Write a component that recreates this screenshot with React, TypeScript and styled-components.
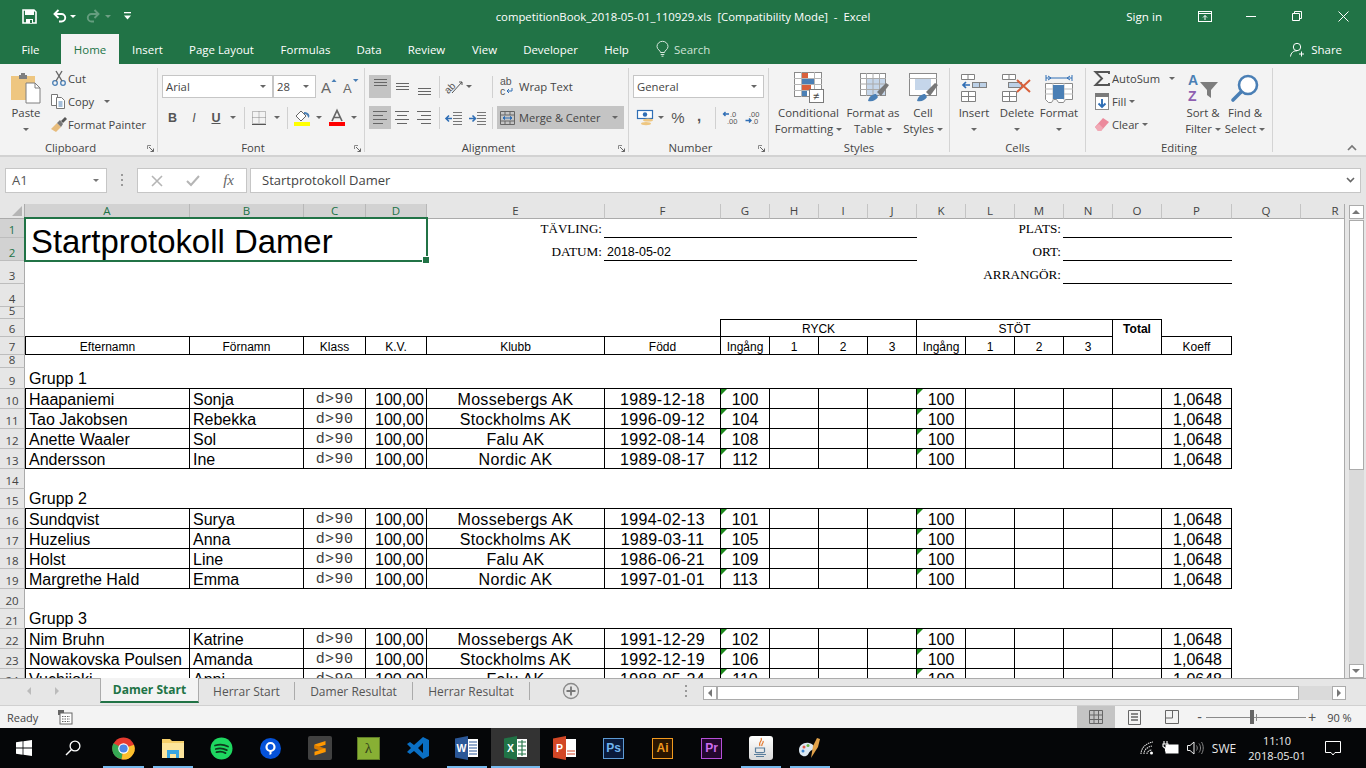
import React from 'react';
import styled, { createGlobalStyle } from 'styled-components';

const UI = '"Open Sans", "Noto Sans", sans-serif';
const CELL = '"Liberation Sans", Arial, sans-serif';
const GREEN = '#217346';

const Global = createGlobalStyle`
  html, body { margin: 0; padding: 0; background: #fff; overflow: hidden; }
  * { box-sizing: border-box; }
  svg { display: block; flex-shrink: 0; overflow: visible; }
`;

const Window = styled.div`
  width: 1366px; height: 768px; display: flex; flex-direction: column; overflow: hidden;
  font-family: ${UI}; font-size: 11.3px; color: #444;
`;

/* ---------- title bar ---------- */
const TitleBar = styled.div`
  height: 32px; background: ${GREEN}; color: #fff; display: grid; grid-template-columns: 1fr auto 1fr; align-items: center;
`;
const Qat = styled.div`display: flex; align-items: center; padding-left: 21px;`;
const QatSlot = styled.div<{ $w: number; $ml?: number }>`width: ${p => p.$w}px; margin-left: ${p => p.$ml ?? 0}px; display: flex; justify-content: center; align-items: center;`;
const DocTitle = styled.div`font-size: 11.35px; white-space: pre;`;
const WinControls = styled.div`display: flex; align-items: center; justify-content: flex-end;`;
const SignIn = styled.span`font-size: 11.6px; margin-right: 20px;`;
const WinBtn = styled.div`width: 46px; display: flex; justify-content: center;`;

/* ---------- ribbon tabs ---------- */
const TabRow = styled.div`height: 32px; background: ${GREEN}; display: flex; align-items: flex-end; color: #fff;`;
const RibbonTab = styled.div<{ $w: number; $on?: boolean }>`
  width: ${p => p.$w}px; height: 30px; display: flex; align-items: center; justify-content: center;
  font-size: 11.45px; flex-shrink: 0;
  background: ${p => (p.$on ? '#f3f3f3' : 'transparent')}; color: ${p => (p.$on ? GREEN : '#fff')};
`;
const SearchBox = styled.div`display: flex; align-items: center; gap: 5px; height: 30px; padding: 0 0 0 14px; font-size: 11.45px; color: #cfe3d7;`;
const Share = styled.div`margin-left: auto; display: flex; align-items: center; gap: 6px; height: 30px; padding: 0 24px 0 0; font-size: 11.45px;`;

/* ---------- ribbon ---------- */
const Ribbon = styled.div`height: 93px; background: #f3f3f3; border-bottom: 2px solid #d2d2d2; display: flex; position: relative;`;
const Group = styled.div<{ $w: number }>`
  width: ${p => p.$w}px; height: 84px; margin-top: 4px; border-right: 1px solid #d4d4d4; display: flex; flex-direction: column; position: relative; flex-shrink: 0;
`;
const GroupBody = styled.div<{ $pl?: number }>`height: 73px; display: flex; padding-left: ${p => p.$pl ?? 0}px;`;
const GroupLabel = styled.div<{ $launch?: boolean }>`
  height: 11px; line-height: 14px; text-align: center; font-size: 11.3px; color: #444; padding-right: ${p => (p.$launch ? 16 : 0)}px; white-space: nowrap;
`;
const Launcher = styled.div`position: absolute; right: 3px; bottom: 0;`;
const Collapse = styled.div`position: absolute; right: 9px; bottom: 4px;`;

const Big = styled.div<{ $w: number }>`
  width: ${p => p.$w}px; display: flex; flex-direction: column; align-items: center; padding-top: 3px; flex-shrink: 0; color: #444;
`;
const BigIcon = styled.div`height: 34px; display: flex; align-items: center; justify-content: center;`;
const BigLine = styled.div`height: 16px; line-height: 16px; font-size: 11.4px; white-space: nowrap; display: flex; align-items: center; gap: 3px;`;
const CaretLine = styled.div`height: 16px; display: flex; align-items: center;`;

const Caret = styled.span<{ $c?: string }>`
  display: inline-block; width: 0; height: 0; flex-shrink: 0;
  border-left: 3.5px solid transparent; border-right: 3.5px solid transparent; border-top: 3.5px solid ${p => p.$c ?? '#666'};
`;

const SmallCol = styled.div<{ $w: number }>`width: ${p => p.$w}px; display: flex; flex-direction: column; margin-top: -1px; flex-shrink: 0;`;
const SmallRow = styled.div`height: 23px; display: flex; align-items: center; font-size: 11.2px; white-space: nowrap;`;
const SmallIcon = styled.div<{ $w: number }>`width: ${p => p.$w}px; display: flex; justify-content: center; align-items: center; flex-shrink: 0;`;

const Stack = styled.div`display: flex; flex-direction: column; padding-top: 7px; gap: 8px;`;
const Line = styled.div`height: 23px; display: flex; align-items: center;`;
const Slot = styled.div<{ $w: number; $ml?: number }>`
  width: ${p => p.$w}px; margin-left: ${p => p.$ml ?? 0}px; height: 23px; display: flex; align-items: center; justify-content: center; flex-shrink: 0;
`;
const Toggle = styled(Slot)<{ $on?: boolean }>`background: ${p => (p.$on ? '#c4c4c4' : 'transparent')};`;
const VSep = styled.div<{ $ml: number; $mr?: number }>`width: 1px; height: 22px; background: #d0d0d0; margin: 0 ${p => p.$mr ?? 0}px 0 ${p => p.$ml}px; flex-shrink: 0;`;
const Combo = styled.div<{ $w: number; $ml?: number }>`
  width: ${p => p.$w}px; height: 23px; margin-left: ${p => p.$ml ?? 0}px; background: #fff; border: 1px solid #c6c6c6; display: flex; align-items: center; justify-content: space-between;
  padding: 0 6px 0 3px; font-size: 11.3px; flex-shrink: 0; color: #444;
`;
const BoldLetter = styled.span<{ $b?: boolean; $i?: boolean; $u?: boolean }>`
  font-family: ${CELL}; font-size: 12.5px; color: #555; font-weight: ${p => (p.$b ? 700 : 400)}; font-style: ${p => (p.$i ? 'italic' : 'normal')}; text-decoration: ${p => (p.$u ? 'underline' : 'none')};
`;
const Label = styled.span<{ $ml?: number }>`margin-left: ${p => p.$ml ?? 0}px; white-space: nowrap; display: inline-flex; align-items: center;`;
const Merge = styled.div`
  width: 127px; height: 23px; background: #c4c4c4; margin-left: 4px; display: flex; align-items: center; padding-left: 3px; flex-shrink: 0; font-size: 11.1px;
`;
const Symbol = styled.span<{ $s: number; $pb?: number; $bold?: boolean }>`
  font-family: ${CELL}; font-size: ${p => p.$s}px; color: #555; line-height: 1; padding-bottom: ${p => p.$pb ?? 0}px; font-weight: ${p => (p.$bold ? 700 : 400)};
`;

/* ---------- formula bar ---------- */
const FormulaBar = styled.div`height: 47px; background: #e6e6e6; display: flex; align-items: flex-start; padding: 11px 5px 0 5px;`;
const NameBox = styled.div`
  width: 102px; height: 25px; background: #fff; border: 1px solid #c6c6c6; display: flex; align-items: center; justify-content: space-between; padding: 0 7px 1px 6px; font-size: 13px; color: #555;
`;
const Dots = styled.div`width: 30px; height: 25px; display: flex; align-items: center; justify-content: center;`;
const FxBox = styled.div`
  width: 110px; height: 25px; background: #fff; border: 1px solid #c6c6c6; display: flex; align-items: center; padding: 0 12px 0 13px; justify-content: space-between;
`;
const FormulaInput = styled.div`
  flex: 1; height: 25px; margin-left: 3px; background: #fff; border: 1px solid #c6c6c6; display: flex; align-items: center; justify-content: space-between; padding: 0 5px 1px 11px; font-size: 13px; color: #444;
`;
const FxText = styled.span`font-family: "Liberation Serif", serif; font-style: italic; font-size: 15px; color: #666;`;

/* ---------- sheet ---------- */
const SheetArea = styled.div`height: 474px; display: flex; background: #e6e6e6;`;
const Sheet = styled.div`
  width: 1345px; height: 474px; overflow: hidden; background: #fff; display: grid; border-right: 1px solid #ababab;
  grid-template-columns: 25px 165px 114px 62px 61px 178px 116px repeat(9, 49px) 70px 69px 69px;
  grid-template-rows: 15px 19px 23px 23px 23px 12px 18px 18px 13px 21px repeat(15, 20px);
  font-family: ${CELL}; color: #000;
`;
const Corner = styled.div`grid-column: 1; grid-row: 1; background: #e6e6e6; border-bottom: 1px solid #ababab; border-right: 1px solid #ababab; display: flex; align-items: flex-end; justify-content: flex-end; padding: 0 2px 2px 0;`;
const ColHead = styled.div<{ $on?: boolean; $c: number }>`
  grid-row: 1; grid-column: ${p => p.$c}; background: ${p => (p.$on ? '#d2d2d2' : '#e6e6e6')}; color: ${p => (p.$on ? GREEN : '#444')};
  border-right: 1px solid ${p => (p.$on ? '#b8b8b8' : '#c4c4c4')}; border-bottom: 1px solid #ababab;
  font-family: ${UI}; font-size: 11.5px; display: flex; align-items: center; justify-content: center; line-height: 14px; overflow: hidden;
`;
const RowHead = styled.div<{ $on?: boolean; $r: number }>`
  grid-column: 1; grid-row: ${p => p.$r}; background: ${p => (p.$on ? '#d2d2d2' : '#e6e6e6')}; color: ${p => (p.$on ? GREEN : '#444')};
  border-right: 1px solid #ababab; border-bottom: 1px solid #bdbdbd; font-family: ${UI}; font-size: 11.5px;
  display: flex; align-items: flex-end; justify-content: center; line-height: 15px; overflow: hidden;
`;
type CellProps = {
  $c: number; $r: number; $span?: number; $rspan?: number; $t?: boolean; $rb?: boolean; $b?: boolean; $l?: boolean;
  $align?: string; $size?: number; $serif?: boolean; $bold?: boolean; $pl?: number; $pr?: number; $pb?: number; $flag?: boolean; $valign?: string;
  $lh?: number; $ls?: number; $ext?: boolean;
};
const Cell = styled.div<CellProps>`
  grid-column: ${p => p.$c} / span ${p => p.$span ?? 1}; grid-row: ${p => p.$r} / span ${p => p.$rspan ?? 1};
  margin-left: ${p => (p.$ext ? -1 : 0)}px;
  border-top: ${p => (p.$t ? '1px solid #000' : 'none')}; border-right: ${p => (p.$rb ? '1px solid #000' : 'none')};
  border-bottom: ${p => (p.$b ? '1px solid #000' : 'none')}; border-left: ${p => (p.$l ? '1px solid #000' : 'none')};
  display: flex; align-items: ${p => p.$valign ?? 'flex-end'}; justify-content: ${p => p.$align ?? 'flex-start'};
  font-size: ${p => p.$size ?? 16}px; font-family: ${p => (p.$serif ? '"Liberation Serif", serif' : CELL)}; font-weight: ${p => (p.$bold ? 700 : 400)};
  padding-left: ${p => p.$pl ?? 0}px; padding-right: ${p => p.$pr ?? 0}px; padding-bottom: ${p => p.$pb ?? 0}px;
  letter-spacing: ${p => p.$ls ?? 0}px; white-space: nowrap; line-height: ${p => p.$lh ?? 16}px; position: relative; min-width: 0; overflow: ${p => (p.$flag ? 'visible' : 'hidden')};
  color: #000;
  ${p => p.$flag ? `&::before { content: ''; position: absolute; left: 0; top: 0; width: 0; height: 0; border-top: 6px solid #1b8a1b; border-right: 6px solid transparent; }` : ''}
`;
const Mono = styled.span`font-family: "Liberation Mono", monospace; font-size: 15px; letter-spacing: 0.4px; color: #3c3c3c;`;
const Selected = styled.div`
  grid-column: 2 / span 4; grid-row: 2 / span 2; position: relative; display: flex; align-items: center; padding: 3px 0 0 6px;
  font-size: 32.9px; line-height: 40px; white-space: nowrap; color: #000;
  &::before { content: ''; position: absolute; left: -1px; top: -2px; right: -1px; bottom: -1px; border: 2px solid ${GREEN}; }
  &::after { content: ''; position: absolute; right: -3px; bottom: -3px; width: 6px; height: 6px; background: ${GREEN}; border: 1px solid #fff; }
`;

const VScroll = styled.div`width: 21px; height: 474px; background: #e6e6e6; display: flex; flex-direction: column; align-items: center; padding: 1px 0 0 1px; flex-shrink: 0;`;
const ScrollBtn = styled.div<{ $w?: number; $h?: number }>`
  width: ${p => p.$w ?? 15}px; height: ${p => p.$h ?? 14}px; background: #fff; border: 1px solid #ababab; display: flex; align-items: center; justify-content: center; flex-shrink: 0;
`;
const VThumb = styled.div`width: 15px; height: 250px; margin-top: 1px; background: #fff; border: 1px solid #ababab;`;
const VTrack = styled.div`flex: 1; width: 15px; background: #dadada;`;
const Tri = styled.span<{ $d: 'u' | 'd' | 'l' | 'r'; $c?: string }>`
  width: 0; height: 0; display: inline-block; border: 4px solid transparent;
  ${p => p.$d === 'u' ? `border-top: 0; border-bottom: 4px solid ${p.$c ?? '#777'};` : ''}
  ${p => p.$d === 'd' ? `border-bottom: 0; border-top: 4px solid ${p.$c ?? '#777'};` : ''}
  ${p => p.$d === 'l' ? `border-left: 0; border-right: 4px solid ${p.$c ?? '#777'};` : ''}
  ${p => p.$d === 'r' ? `border-right: 0; border-left: 4px solid ${p.$c ?? '#777'};` : ''}
`;

/* ---------- sheet tabs ---------- */
const TabsBar = styled.div`
  height: 28px; background: #e6e6e6; border-top: 1px solid #ababab; border-bottom: 1px solid #d0d0d0; display: flex; align-items: flex-start;
`;
const TabNav = styled.div`width: 100px; height: 24px; display: flex; align-items: center; padding-left: 27px; gap: 24px; flex-shrink: 0;`;
const SheetTab = styled.div<{ $w: number; $on?: boolean }>`
  width: ${p => p.$w}px; flex-shrink: 0; display: flex; align-items: center; justify-content: center; font-size: 12px;
  margin-top: ${p => (p.$on ? '-1px' : '3px')}; height: ${p => (p.$on ? '25px' : '18px')};
  color: ${p => (p.$on ? GREEN : '#555')}; font-weight: ${p => (p.$on ? 700 : 400)};
  background: ${p => (p.$on ? '#f3f3f3' : 'transparent')};
  border-right: 1px solid #ababab; border-left: ${p => (p.$on ? '1px solid #ababab' : 'none')};
  border-bottom: ${p => (p.$on ? `2px solid ${GREEN}` : 'none')};
`;
const AddTab = styled.div`margin: 3px 0 0 32px; width: 18px; height: 18px;`;
const HDots = styled.div`margin: 6px 0 0 105px; width: 3px;`;
const HScroll = styled.div`margin: 7px 0 0 15px; display: flex; width: 643px; height: 14px; background: #dadada;`;
const HThumb = styled.div`width: 582px; height: 14px; background: #fff; border: 1px solid #ababab;`;
const HGap = styled.div`flex: 1;`;

/* ---------- status ---------- */
const Status = styled.div`height: 22px; background: #f3f3f3; display: flex; align-items: center; font-size: 11px; color: #444; padding-left: 7px;`;
const MacroIcon = styled.div`margin-left: 20px;`;
const ViewBtn = styled.div<{ $on?: boolean; $w: number; $ml?: number }>`
  width: ${p => p.$w}px; height: 22px; margin-left: ${p => p.$ml ?? 0}px; display: flex; align-items: center; justify-content: center; background: ${p => (p.$on ? '#c4c4c4' : 'transparent')};
`;
const Zoom = styled.div`display: flex; align-items: center; margin-left: 6px; white-space: nowrap;`;
const Slider = styled.div`width: 100px; height: 1px; background: #8a8a8a; margin: 0 2px 0 4px; position: relative;`;
const Knob = styled.span`position: absolute; left: 44px; top: -7px; width: 4px; height: 14px; background: #666;`;
const Tick = styled.span`position: absolute; left: 50px; top: -3px; width: 1px; height: 7px; background: #8a8a8a;`;
const ZoomText = styled.span`margin-left: 11px; font-size: 11px;`;

/* ---------- taskbar ---------- */
const Taskbar = styled.div`height: 40px; background: #050608; display: flex; align-items: stretch; color: #e8e8e8; font-size: 12px;`;
const TaskBtn = styled.div<{ $w: number; $run?: boolean; $on?: boolean }>`
  width: ${p => p.$w}px; display: flex; align-items: center; justify-content: center; position: relative; flex-shrink: 0;
  background: ${p => (p.$on ? '#333' : 'transparent')};
  ${p => p.$run ? `&::after { content: ''; position: absolute; left: ${p.$on ? 0 : 5}px; right: ${p.$on ? 0 : 4}px; bottom: 0; height: 2px; background: #76b9ed; }` : ''}
`;
const AppBox = styled.div<{ $bd: string; $bg: string; $fg: string }>`
  width: 21px; height: 21px; border: 1.5px solid ${p => p.$bd}; background: ${p => p.$bg}; color: ${p => p.$fg}; display: flex; align-items: center; justify-content: center;
  font-family: ${CELL}; font-weight: 700; font-size: 12px; line-height: 1;
`;
const Tray = styled.div`margin-left: auto; display: flex; align-items: center;`;
const TraySlot = styled.div<{ $w: number; $pl?: number }>`width: ${p => p.$w}px; padding-left: ${p => p.$pl ?? 0}px; display: flex; justify-content: center; align-items: center;`;
const Clock = styled.div`width: 80px; text-align: center; line-height: 15px; font-size: 11px; color: #eee;`;

/* ---------- icons ---------- */
const Launch = () => (<svg width="7" height="7" viewBox="0 0 7 7"><path d="M.5 4V.5H4" fill="none" stroke="#8a8a8a"/><path d="M2 2l4.500 4.500M6.500 3.500v3h-3" fill="none" stroke="#666"/></svg>);
const SaveI = () => (<svg width="15" height="15" viewBox="0 0 15 15"><path d="M1 1h11l2 2v11H1z" fill="none" stroke="#fff" strokeWidth="1.6"/><rect x="3" y="1" width="9" height="5" fill="#fff"/><rect x="4" y="10" width="7" height="4" fill="#fff"/><rect x="8" y="11" width="2" height="3" fill={GREEN}/></svg>);
const UndoShape = styled.svg<{ $o?: number; $flip?: boolean }>`opacity: ${p => p.$o ?? 1}; transform: ${p => (p.$flip ? 'scaleX(-1)' : 'none')};`;
const UndoI = ({ o = 1, flip = false }: { o?: number; flip?: boolean }) => (<UndoShape $o={o} $flip={flip} width="14" height="14" viewBox="0 0 14 14"><path d="M2 5h6.500a3.700 3.700 0 0 1 0 7.500H6" fill="none" stroke="#fff" strokeWidth="1.9"/><path d="M5.500 1L1.500 5l4 4" fill="none" stroke="#fff" strokeWidth="1.9"/></UndoShape>);
const CustomizeI = () => (<svg width="7" height="8" viewBox="0 0 7 8"><rect y="0" width="7" height="1.3" fill="#fff"/><path d="M0 3.500h7L3.500 7.500z" fill="#fff"/></svg>);
const RibbonDisp = () => (<svg width="14" height="11" viewBox="0 0 14 11"><rect x=".5" y=".5" width="13" height="10" fill="none" stroke="#fff"/><path d="M.5 2.500h13" stroke="#fff"/><path d="M7 9V4.500M5 6.500l2-2 2 2" fill="none" stroke="#fff"/></svg>);
const MinI = () => (<svg width="10" height="10" viewBox="0 0 10 10"><path d="M0 5.500h10" stroke="#fff"/></svg>);
const RestoreI = () => (<svg width="10" height="10" viewBox="0 0 10 10"><path d="M.5 2.500h7v7h-7zM2.500 2.500v-2h7v7h-2" fill="none" stroke="#fff"/></svg>);
const CloseI = () => (<svg width="11" height="11" viewBox="0 0 11 11"><path d="M.5.5l10 10M10.500.5l-10 10" stroke="#fff"/></svg>);
const BulbI = () => (<svg width="13" height="16" viewBox="0 0 13 16"><path d="M4.500 11.500c0-2-3.500-3-3.500-6a5.500 5.200 0 0 1 11 0c0 3-3.500 4-3.500 6zM4.700 13.500h3.600M5.500 15.200h2" fill="none" stroke="#d8e8de"/></svg>);
const ShareI = () => (<svg width="15" height="15" viewBox="0 0 15 15"><circle cx="7" cy="5" r="3.700" fill="none" stroke="#fff"/><path d="M.5 14.500c.5-4 3-5.700 6.500-5.700M11.500 9.500v5M9 12h5" fill="none" stroke="#fff"/></svg>);
const PasteI = () => (<svg width="30" height="32" viewBox="0 0 30 32"><rect x="0" y="4" width="24" height="24" fill="#eec680"/><path d="M8 3h8v4H8z" fill="#7f7f7f"/><rect x="10" y="1" width="4" height="3" fill="#7f7f7f"/><path d="M15 11h9l5 5v15H15z" fill="#fff" stroke="#7f7f7f"/><path d="M24 11v5h5" fill="none" stroke="#7f7f7f"/></svg>);
const CutI = () => (<svg width="14" height="15" viewBox="0 0 14 15"><circle cx="3" cy="12" r="2.300" fill="none" stroke="#4a7fb5" strokeWidth="1.3"/><circle cx="11" cy="12" r="2.300" fill="none" stroke="#4a7fb5" strokeWidth="1.3"/><path d="M4 10L10 0M10 10L4 0" stroke="#666" strokeWidth="1.4"/></svg>);
const CopyI = () => (<svg width="15" height="15" viewBox="0 0 15 15"><path d="M.5.5h6v11h-6z" fill="#fff" stroke="#777"/><path d="M5.500 3.500h5l3 3v8h-8z" fill="#fff" stroke="#777"/><path d="M7.500 8h4M7.500 10h4M7.500 12h4" stroke="#4a7fb5"/></svg>);
const PainterI = () => (<svg width="16" height="15" viewBox="0 0 16 15"><path d="M0 12l6-6 4 4-5 5z" fill="#e7bc7c"/><path d="M6 6l3-3 3 4-2 3z" fill="#777"/><path d="M10 4l4-4 2 2-4 4z" fill="#555"/></svg>);
const GrowI = ({ big }: { big?: boolean }) => (<svg width="16" height="17" viewBox="0 0 16 17"><text x="0" y="15" fontFamily="Liberation Sans" fontSize={big ? 15 : 13} fill="#666">A</text><path d={big ? 'M10.500 4l2.500-3 2.500 3z' : 'M10 1h5.500L12.700 4z'} fill="#4a7fb5"/></svg>);
const BordersI = () => (<svg width="14" height="14" viewBox="0 0 14 14"><path d="M.5.5h13v12H.5zM7 .5v12M.5 6.500h13" fill="none" stroke="#888" strokeDasharray="1 1"/><path d="M0 13.500h14" stroke="#555"/></svg>);
const FillI = () => (<svg width="17" height="16" viewBox="0 0 17 16"><path d="M2 6l5-5 5 5-5 5z" fill="#fff" stroke="#666"/><path d="M10 2c3 0 5 1 5.500 4l-1 2-1-2c-.5-1-1-2-3.500-2z" fill="#4a7fb5"/><rect y="12" width="16" height="4" fill="#ffff00"/></svg>);
const ColorI = () => (<svg width="16" height="16" viewBox="0 0 16 16"><path d="M3 11L8 .5 13 11M4.800 7.500h6.400" fill="none" stroke="#666" strokeWidth="1.7"/><rect y="12" width="16" height="4" fill="#ff0000"/></svg>);
const AlignV = ({ pos }: { pos: 't' | 'm' | 'b' }) => { const y = pos === 't' ? 1.5 : pos === 'm' ? 5.5 : 10.5; return (<svg width="15" height="18" viewBox="0 0 15 18"><path d={`M1 ${y}h13M1 ${y + 3}h13M1 ${y + 6}h13`} stroke="#666" fill="none"/></svg>); };
const AlignH = ({ pos }: { pos: 'l' | 'c' | 'r' }) => { const sx = pos === 'l' ? 1 : pos === 'c' ? 3 : 5; return (<svg width="16" height="18" viewBox="0 0 16 18"><path d={`M1 2.500h14M${sx} 6.500h10M1 10.500h14M${sx} 14.500h10`} stroke="#666" fill="none"/></svg>); };
const OrientI = () => (<svg width="20" height="16" viewBox="0 0 20 16"><text x="1" y="13" fontFamily="Liberation Sans" fontSize="10" fill="#555" transform="rotate(-45 6 9)">ab</text><path d="M9 14L19 3M16 3h3v3" fill="none" stroke="#555"/></svg>);
const Indent = ({ out }: { out?: boolean }) => (<svg width="17" height="14" viewBox="0 0 17 14"><path d="M8 1.500h9M8 4.500h9M8 7.500h9M8 10.500h9M8 13.500h9" stroke="#777"/><path d={out ? 'M7 7.500H1M4 4.500l-3 3 3 3' : 'M0 7.500h6M3.500 4.500l3 3-3 3'} fill="none" stroke="#2f6eb5" strokeWidth="1.6"/></svg>);
const WrapI = () => (<svg width="13" height="19" viewBox="0 0 13 19"><text x="0" y="8" fontFamily="Liberation Sans" fontSize="10.500" fill="#555">ab</text><text x="0" y="17.500" fontFamily="Liberation Sans" fontSize="10.500" fill="#555">c</text><path d="M12 11v3H7M9 12l-2 2 2 2" fill="none" stroke="#2f6eb5"/></svg>);
const MergeI = () => (<svg width="15" height="14" viewBox="0 0 15 14"><path d="M.5.5h14v13H.5zM.5 4h14M.5 10h14M5 .5V4M10 .5V4M5 10v3.500M10 10v3.500" fill="none" stroke="#666"/><path d="M3 7h9M5 5.300L3 7l2 1.700M10 5.300L12 7l-2 1.700" fill="#2f6eb5" stroke="#2f6eb5"/></svg>);
const CurrencyI = () => (<svg width="17" height="16" viewBox="0 0 17 16"><rect x=".5" y=".5" width="15" height="8" fill="#fff" stroke="#2f6eb5" strokeWidth="1.2"/><circle cx="8" cy="4.500" r="2.200" fill="#2f6eb5"/><ellipse cx="11" cy="10" rx="5" ry="1.600" fill="#eec680"/><ellipse cx="9" cy="13.600" rx="5" ry="1.600" fill="#eec680"/></svg>);
const DecI = ({ inc }: { inc?: boolean }) => (<svg width="15" height="15" viewBox="0 0 15 15"><text x={inc ? 7 : 4} y="6.500" fontFamily="Liberation Sans" fontSize="7.500" fill="#555">{inc ? '.0' : '.00'}</text><text x={inc ? 4 : 7} y="13.500" fontFamily="Liberation Sans" fontSize="7.500" fill="#555">{inc ? '.00' : '.0'}</text><path d={inc ? 'M6 4H.5M2.500 2L.5 4l2 2' : 'M.5 10.500H6M4 8.500l2 2-2 2'} fill="none" stroke="#2f6eb5" strokeWidth="1.400"/></svg>);
const CondI = () => (<svg width="30" height="32" viewBox="0 0 30 32"><rect x=".5" y=".5" width="27" height="24" fill="#fff" stroke="#8a8a8a"/><path d="M7.500 0v25M20.500 0v25M0 6.500h28M0 12.500h28M0 18.500h28" stroke="#b5b5b5"/><rect x="8" y="1" width="6" height="5" fill="#d9603b"/><rect x="8" y="7" width="12" height="5" fill="#4a7fb5"/><rect x="8" y="13" width="9" height="5" fill="#d9603b"/><rect x="8" y="19" width="5" height="5" fill="#4a7fb5"/><rect x="15.500" y="17.500" width="14" height="13" fill="#fff" stroke="#7a7a7a"/><text x="19" y="28" fontFamily="Liberation Sans" fontSize="11" fill="#444">≠</text></svg>);
const TableI = () => (<svg width="33" height="30" viewBox="-3 0 33 30"><rect x=".5" y=".5" width="25" height="22" fill="#fff" stroke="#8a8a8a"/><rect x="6" y="6" width="19" height="16" fill="#c5d6ea"/><path d="M6.500 0v23M13 0v23M19.500 0v23M0 5.500h26M0 11h26M0 16.500h26" stroke="#aaa"/><path d="M8 28c1-5 5-7 8-7l2 3c-2 3-5 5-10 4z" fill="#4a7fb5"/><path d="M17 19l9-9 3 2-8 11z" fill="#777"/></svg>);
const StylesI = () => (<svg width="32" height="30" viewBox="-2 0 32 30"><rect x=".5" y=".5" width="27" height="22" fill="#fff" stroke="#8a8a8a"/><path d="M0 5.500h28" stroke="#aaa"/><rect x="6" y="6" width="16" height="11" fill="#c5d6ea"/><path d="M8 28c1-5 5-7 8-7l2 3c-2 3-5 5-10 4z" fill="#4a7fb5"/><path d="M17 19l9-9 3 2-8 11z" fill="#777"/></svg>);
const InsertI = () => (<svg width="26" height="28" viewBox="0 0 26 28"><path d="M.5.5h13v5H.5zM7 .5v5M.5 17.500h14v10H.5zM7.500 17.500v10M.5 22.500h14" fill="#fff" stroke="#808080"/><rect x="11.500" y="8.500" width="14" height="5" fill="#bcd0e6" stroke="#808080"/><path d="M18.500 8.500v5" stroke="#808080"/><path d="M9 11H2M5 8l-3 3 3 3" fill="none" stroke="#2f6eb5" strokeWidth="1.7"/></svg>);
const DeleteI = () => (<svg width="30" height="28" viewBox="0 0 30 28"><path d="M.5.5h13v5H.5zM7 .5v5M.5 17.500h14v10H.5zM7.500 17.500v10M.5 22.500h14" fill="#fff" stroke="#808080"/><rect x="6.500" y="8.500" width="13" height="5" fill="#bcd0e6" stroke="#808080"/><path d="M15 6l13 12M28 6L15 18" stroke="#d9603b" strokeWidth="2"/></svg>);
const FormatI = () => (<svg width="28" height="30" viewBox="0 0 28 30"><path d="M1 5h26M1 2v6M27 2v6M6 5L3 3M6 5L3 7M22 5l3-2M22 5l3 2" fill="none" stroke="#2f6eb5"/><path d="M.5 10.500h27v16h-7l-2 3h-5l-2-3h-3l-2 3h-3l-3-3z" fill="#fff" stroke="#8a8a8a"/><path d="M8 10v17M19 10v17M0 16h28M0 21h28" stroke="#bbb"/><rect x="8" y="12" width="11" height="14" fill="#4a7fb5"/></svg>);
const SumI = () => (<svg width="16" height="15" viewBox="0 0 16 15"><path d="M15 3V1H1.500L8 7.500 1.500 14H15v-2" fill="none" stroke="#555" strokeWidth="1.9"/></svg>);
const FillDownI = () => (<svg width="14" height="17" viewBox="0 0 14 17"><rect x=".5" y=".5" width="13" height="16" fill="#fff" stroke="#8a8a8a"/><rect width="14" height="4" fill="#7a7a7a"/><path d="M7 6v8M3.500 10.500L7 14l3.500-3.500" fill="none" stroke="#2f6eb5" strokeWidth="1.9"/></svg>);
const EraserI = () => (<svg width="14" height="13" viewBox="0 0 14 13"><path d="M0 9l8-9 6 4-8 9H3z" fill="#ec8a9c"/><path d="M0 9l3 4h3l2-3-4-4z" fill="#f1a9b5"/></svg>);
const SortI = () => (<svg width="30" height="28" viewBox="0 0 30 28"><text x="0" y="11" fontFamily="Liberation Sans" fontWeight="700" fontSize="14" fill="#4a7fb5">A</text><text x="0" y="27" fontFamily="Liberation Sans" fontWeight="700" fontSize="14" fill="#8e5fb0">Z</text><path d="M12 8h18l-7 8v8l-4-3v-5z" fill="#7d7d7d"/></svg>);
const FindI = () => (<svg width="28" height="28" viewBox="0 0 28 28"><circle cx="17" cy="11" r="9" fill="#fff" stroke="#4a7fb5" strokeWidth="2.600"/><path d="M10 18L2 26" stroke="#4a7fb5" strokeWidth="3.600" strokeLinecap="round"/></svg>);
const ChevronUp = () => (<svg width="10" height="7" viewBox="0 0 10 7"><path d="M1 6l4-4 4 4" fill="none" stroke="#777" strokeWidth="1.7"/></svg>);
const ChevronDown = () => (<svg width="9" height="6" viewBox="0 0 9 6"><path d="M1 1l3.500 3.500L8 1" fill="none" stroke="#666" strokeWidth="1.6"/></svg>);
const CrossI = () => (<svg width="12" height="12" viewBox="0 0 12 12"><path d="M1 1l10 10M11 1L1 11" stroke="#b5b5b5" strokeWidth="1.6"/></svg>);
const CheckI = () => (<svg width="14" height="12" viewBox="0 0 14 12"><path d="M1 6l4 4 8-9" fill="none" stroke="#b5b5b5" strokeWidth="2"/></svg>);
const VDots = () => (<svg width="3" height="14" viewBox="0 0 3 14"><path d="M0 1h2M0 6h2M0 11h2" stroke="#999" strokeWidth="2"/></svg>);
const CornerTri = () => (<svg width="10" height="10" viewBox="0 0 10 10"><path d="M10 0v10H0z" fill="#b5b5b5"/></svg>);
const PlusI = () => (<svg width="18" height="18" viewBox="0 0 18 18"><circle cx="9" cy="9" r="7.500" fill="none" stroke="#8a8a8a" strokeWidth="1.3"/><path d="M9 4.500v9M4.500 9h9" stroke="#777" strokeWidth="1.8"/></svg>);
const MacroI = () => (<svg width="14" height="14" viewBox="0 0 14 14"><rect x="0" y="0" width="6" height="5" fill="#666"/><rect x="2" y="3" width="12" height="11" fill="#fff" stroke="#666"/><path d="M4 6.500h8M4 9h8M4 11.500h8" stroke="#666" strokeDasharray="1.500 1"/></svg>);
const NormalI = () => (<svg width="14" height="14" viewBox="0 0 14 14"><path d="M.5.5h13v13H.5zM.5 5h13M.5 9.500h13M5 .5v13M9.500 .5v13" fill="none" stroke="#666"/></svg>);
const LayoutI = () => (<svg width="13" height="15" viewBox="0 0 13 15"><path d="M.5.5h12v14H.5z" fill="none" stroke="#666"/><path d="M3 4h7M3 7h7M3 10h7" stroke="#666" strokeWidth="1.5"/></svg>);
const BreakI = () => (<svg width="14" height="14" viewBox="0 0 14 14"><path d="M.5.5h13v13H.5zM7.500 .5V8H.5" fill="none" stroke="#666"/></svg>);
const WinI = () => (<svg width="16" height="16" viewBox="0 0 16 16"><path d="M0 2.200L6.600 1.300V7.600H0zM7.400 1.200L16 0v7.600H7.400zM0 8.400h6.600V14.700L0 13.800zM7.400 8.400H16V16L7.400 14.800z" fill="#fff"/></svg>);
const SearchI = () => (<svg width="16" height="16" viewBox="0 0 16 16"><circle cx="10" cy="6" r="4.900" fill="none" stroke="#fff" strokeWidth="1.300"/><path d="M6.500 9.500L1 15" stroke="#fff" strokeWidth="1.500"/></svg>);
const ChromeI = () => (<svg width="23" height="23" viewBox="0 0 24 24"><circle cx="12" cy="12" r="11.500" fill="#e53a2f"/><path d="M12 12L1.500 6.500A11.500 11.500 0 0 0 10 23.300z" fill="#36a853"/><path d="M12 12L23 8A11.500 11.500 0 0 1 10 23.300z" fill="#fbc02d"/><circle cx="12" cy="12" r="5.500" fill="#fff"/><circle cx="12" cy="12" r="4.300" fill="#4b86e6"/></svg>);
const FolderI = () => (<svg width="22" height="20" viewBox="0 0 22 20"><path d="M0 1h8l2 2h12v17H0z" fill="#f6cf6a"/><path d="M0 5h22v15H0z" fill="#fde59c"/><path d="M5 12h12v8h-3v-4H8v4H5z" fill="#3aa6e0"/></svg>);
const SpotifyI = () => (<svg width="23" height="23" viewBox="0 0 23 23"><circle cx="11.500" cy="11.500" r="11" fill="#1ed760"/><path d="M5 8.500c4-1.300 9-1 13 1M5.800 12c3.500-1 7.500-.7 11 1.100M6.500 15.200c3-.8 6.500-.5 9 .9" fill="none" stroke="#0d3a1d" strokeWidth="1.800" strokeLinecap="round"/></svg>);
const TreeI = () => (<svg width="21" height="21" viewBox="0 0 21 21"><circle cx="10.500" cy="10.500" r="10.500" fill="#0552d9"/><circle cx="10.500" cy="9" r="4" fill="none" stroke="#fff" strokeWidth="2.200"/><path d="M9.500 12v5l2-1v-4" fill="#fff"/></svg>);
const SublimeI = () => (<svg width="24" height="24" viewBox="0 0 24 24"><rect width="24" height="24" rx="2" fill="#414141"/><path d="M6.500 8.500L17.500 5v3.800L6.500 12.300z" fill="#ff9800"/><path d="M6.500 9L17.500 12.500v3.800L6.500 12.800z" fill="#d87a00"/><path d="M6.500 15.700L17.500 12.200v3.800L6.500 19.500z" fill="#ff9800"/></svg>);
const LambdaBox = styled.div`
  width: 23px; height: 23px; background: #88b034; border: 1px solid #5f7d26; color: #33421a; display: flex; align-items: center; justify-content: center; font-family: "Liberation Serif", serif; font-size: 15px;
`;
const VsI = () => (<svg width="24" height="24" viewBox="0 0 24 24"><path d="M17 1l6 3v16l-6 3-9-8-4 3-3-2 4-4-4-4 3-2 4 3zM17 7l-5 5 5 5z" fill="#0a6fc4"/></svg>);
const OfficeI = ({ c, letter, lines }: { c: string; letter: string; lines: string }) => (<svg width="24" height="24" viewBox="0 0 24 24"><path d="M10 3h13v18H10z" fill="#fff"/><path d={lines} stroke={c} strokeWidth="1.100" fill="none"/><path d="M0 2.500L13 0v24L0 21.500z" fill={c}/><text x="6.500" y="16" textAnchor="middle" fontFamily="Liberation Sans" fontWeight="700" fontSize="10.500" fill="#fff">{letter}</text></svg>);
const JavaBox = styled.div`width: 24px; height: 24px; border-radius: 3px; background: linear-gradient(#fff, #d9d9d9); display: flex; align-items: center; justify-content: center;`;
const JavaI = () => (<svg width="16" height="20" viewBox="0 0 16 20"><path d="M8 0c2 3-3 4-1 8M10 3c1 2-2 3-1 5" fill="none" stroke="#e2762a" strokeWidth="1.200"/><path d="M2.500 10h9v4c0 1-9 1-9 0zM1 16.500h12M3 18.500h8" fill="none" stroke="#5a7e9c" strokeWidth="1.200"/></svg>);
const PaletteI = () => (<svg width="24" height="24" viewBox="0 0 24 24"><path d="M1 14c0-5 5-8 10-7s7 5 3 7-3 5-6 6-7-1-7-6z" fill="#dce8f2"/><circle cx="6" cy="11" r="1.500" fill="#e05a4a"/><circle cx="10" cy="9.500" r="1.500" fill="#6bb54a"/><circle cx="5" cy="15" r="1.500" fill="#3f86cf"/><path d="M13 22l2-12 4-8 3 1-2 8z" fill="#e2a24a"/></svg>);
const WifiI = () => (<svg width="16" height="14" viewBox="0 0 16 14"><path d="M1 13C1 7 6 2 13 1M4 13c0-4 3-7 8-8M7 13c0-2 2-4 5-4" fill="none" stroke="#ddd" strokeWidth="1.100" strokeDasharray="1.500 .7"/><circle cx="11.500" cy="12" r="1.500" fill="#fff"/></svg>);
const PowerI = () => (<svg width="17" height="14" viewBox="0 0 17 14"><rect x="4" y="4" width="12" height="8" fill="#fff" stroke="#fff"/><path d="M2 0v3M5 0v3M1 3h5v2.500l-2.500 2-2.500-2zM3.500 7v3h2" fill="none" stroke="#fff" strokeWidth="1.100"/></svg>);
const VolI = () => (<svg width="16" height="14" viewBox="0 0 16 14"><path d="M.5 4.500h2.500l4-3.500v12l-4-3.500H.5z" fill="none" stroke="#eee"/><path d="M9.500 4.500c1 1.500 1 3.500 0 5M12 2.500c2 2.500 2 6.500 0 9M14.500 1c2.300 3.500 2.300 8.500 0 12" fill="none" stroke="#888"/></svg>);
const NotifI = () => (<svg width="16" height="15" viewBox="0 0 16 15"><path d="M.5.5h15v11h-5.500l-2 2.500-2-2.500H.5z" fill="none" stroke="#fff"/></svg>);

/* ---------- data ---------- */
const COLS = 'ABCDEFGHIJKLMNOPQR'.split('');
const ROWS = Array.from({ length: 24 }, (_, i) => i + 1);
type Person = [string, string, string, string, number];
const groups: { title: string; start: number; people: Person[] }[] = [
  { title: 'Grupp 1', start: 10, people: [
    ['Haapaniemi', 'Sonja', 'Mossebergs AK', '1989-12-18', 100],
    ['Tao Jakobsen', 'Rebekka', 'Stockholms AK', '1996-09-12', 104],
    ['Anette Waaler', 'Sol', 'Falu AK', '1992-08-14', 108],
    ['Andersson', 'Ine', 'Nordic AK', '1989-08-17', 112],
  ] },
  { title: 'Grupp 2', start: 16, people: [
    ['Sundqvist', 'Surya', 'Mossebergs AK', '1994-02-13', 101],
    ['Huzelius', 'Anna', 'Stockholms AK', '1989-03-11', 105],
    ['Holst', 'Line', 'Falu AK', '1986-06-21', 109],
    ['Margrethe Hald', 'Emma', 'Nordic AK', '1997-01-01', 113],
  ] },
  { title: 'Grupp 3', start: 22, people: [
    ['Nim Bruhn', 'Katrine', 'Mossebergs AK', '1991-12-29', 102],
    ['Nowakovska Poulsen', 'Amanda', 'Stockholms AK', '1992-12-19', 106],
    ['Vuchijoki', 'Anni', 'Falu AK', '1988-05-24', 110],
  ] },
];
const c = (letter: string) => COLS.indexOf(letter) + 2;
const r = (row: number) => row + 1;

const HeadCell = (p: CellProps & { children?: React.ReactNode }) => <Cell $size={12} $lh={14} $align="center" $rb $b {...p} />;

const PersonRow = ({ row, p }: { row: number; p: Person }) => (
  <>
    <Cell $c={c('A')} $r={r(row)} $l $rb $b $pl={3}>{p[0]}</Cell>
    <Cell $c={c('B')} $r={r(row)} $rb $b $pl={3}>{p[1]}</Cell>
    <Cell $c={c('C')} $r={r(row)} $rb $b $align="center"><Mono>d&gt;90</Mono></Cell>
    <Cell $c={c('D')} $r={r(row)} $rb $b $align="flex-end" $pr={2}>100,00</Cell>
    <Cell $c={c('E')} $r={r(row)} $rb $b $align="center" $ls={0.3}>{p[2]}</Cell>
    <Cell $c={c('F')} $r={r(row)} $rb $b $align="center" $ls={0.3}>{p[3]}</Cell>
    <Cell $c={c('G')} $r={r(row)} $rb $b $align="center" $flag>{p[4]}</Cell>
    {['H', 'I', 'J'].map(l => <Cell key={l} $c={c(l)} $r={r(row)} $rb $b />)}
    <Cell $c={c('K')} $r={r(row)} $rb $b $align="center" $flag>100</Cell>
    {['L', 'M', 'N', 'O'].map(l => <Cell key={l} $c={c(l)} $r={r(row)} $rb $b />)}
    <Cell $c={c('P')} $r={r(row)} $rb $b $align="flex-end" $pr={9}>1,0648</Cell>
  </>
);

const tabs: [string, number, boolean?][] = [['File', 61], ['Home', 58, true], ['Insert', 57], ['Page Layout', 91], ['Formulas', 77], ['Data', 50], ['Review', 65], ['View', 51], ['Developer', 81], ['Help', 51]];

export default function App() {
  return (
    <Window>
      <Global />
      <TitleBar>
        <Qat>
          <QatSlot $w={16}><SaveI /></QatSlot>
          <QatSlot $w={14} />
          <QatSlot $w={17}><UndoI /></QatSlot>
          <QatSlot $w={10}><Caret $c="#fff" /></QatSlot>
          <QatSlot $w={22} $ml={4}><UndoI o={0.3} flip /></QatSlot>
          <QatSlot $w={8}><Caret $c="#6f9f84" /></QatSlot>
          <QatSlot $w={30}><CustomizeI /></QatSlot>
        </Qat>
        <DocTitle>{'competitionBook_2018-05-01_110929.xls  [Compatibility Mode]  -  Excel'}</DocTitle>
        <WinControls>
          <SignIn>Sign in</SignIn>
          <WinBtn><RibbonDisp /></WinBtn>
          <WinBtn><MinI /></WinBtn>
          <WinBtn><RestoreI /></WinBtn>
          <WinBtn><CloseI /></WinBtn>
        </WinControls>
      </TitleBar>

      <TabRow>
        {tabs.map(([t, w, on]) => <RibbonTab key={t} $w={w} $on={on}>{t}</RibbonTab>)}
        <SearchBox><BulbI />Search</SearchBox>
        <Share><ShareI />Share</Share>
      </TabRow>

      <Ribbon>
        <Group $w={158}>
          <GroupBody $pl={3}>
            <Big $w={46}><BigIcon><PasteI /></BigIcon><BigLine>Paste</BigLine><CaretLine><Caret /></CaretLine></Big>
            <SmallCol $w={105}>
              <SmallRow><SmallIcon $w={19}><CutI /></SmallIcon>Cut</SmallRow>
              <SmallRow><SmallIcon $w={19}><CopyI /></SmallIcon>Copy<Label $ml={10}><Caret /></Label></SmallRow>
              <SmallRow><SmallIcon $w={19}><PainterI /></SmallIcon>Format Painter</SmallRow>
            </SmallCol>
          </GroupBody>
          <GroupLabel $launch>Clipboard</GroupLabel>
          <Launcher><Launch /></Launcher>
        </Group>

        <Group $w={207}>
          <GroupBody $pl={4}>
            <Stack>
              <Line>
                <Combo $w={111}><span>Arial</span><Caret /></Combo>
                <Combo $w={43}><span>28</span><Caret /></Combo>
                <Slot $w={16} $ml={5}><GrowI big /></Slot>
                <Slot $w={16} $ml={6}><GrowI /></Slot>
              </Line>
              <Line>
                <Slot $w={21}><BoldLetter $b>B</BoldLetter></Slot>
                <Slot $w={22}><BoldLetter $i>I</BoldLetter></Slot>
                <Slot $w={22}><BoldLetter $b $u>U</BoldLetter></Slot>
                <Slot $w={12}><Caret /></Slot>
                <VSep $ml={5} />
                <Slot $w={27}><BordersI /></Slot>
                <Slot $w={9}><Caret /></Slot>
                <VSep $ml={6} />
                <Slot $w={28}><FillI /></Slot>
                <Slot $w={6}><Caret /></Slot>
                <Slot $w={30}><ColorI /></Slot>
                <Slot $w={3}><Caret /></Slot>
              </Line>
            </Stack>
          </GroupBody>
          <GroupLabel $launch>Font</GroupLabel>
          <Launcher><Launch /></Launcher>
        </Group>

        <Group $w={264}>
          <GroupBody $pl={4}>
            <Stack>
              <Line>
                <Toggle $w={22} $on><AlignV pos="t" /></Toggle>
                <Toggle $w={22}><AlignV pos="m" /></Toggle>
                <Toggle $w={22}><AlignV pos="b" /></Toggle>
                <VSep $ml={4} />
                <Slot $w={26}><OrientI /></Slot>
                <Slot $w={6}><Caret /></Slot>
                <VSep $ml={20} />
                <Slot $w={26}><WrapI /></Slot>
                <Label>Wrap Text</Label>
              </Line>
              <Line>
                <Toggle $w={22} $on><AlignH pos="l" /></Toggle>
                <Toggle $w={22}><AlignH pos="c" /></Toggle>
                <Toggle $w={22}><AlignH pos="r" /></Toggle>
                <VSep $ml={4} />
                <Slot $w={26}><Indent out /></Slot>
                <Slot $w={22}><Indent /></Slot>
                <VSep $ml={4} />
                <Merge><MergeI /><Label $ml={4}>Merge &amp; Center</Label><Label $ml={11}><Caret /></Label></Merge>
              </Line>
            </Stack>
          </GroupBody>
          <GroupLabel $launch>Alignment</GroupLabel>
          <Launcher><Launch /></Launcher>
        </Group>

        <Group $w={140}>
          <GroupBody $pl={4}>
            <Stack>
              <Line><Combo $w={131}><span>General</span><Caret /></Combo></Line>
              <Line>
                <Slot $w={24}><CurrencyI /></Slot>
                <Slot $w={7}><Caret /></Slot>
                <Slot $w={28}><Symbol $s={15}>%</Symbol></Slot>
                <Slot $w={14}><Symbol $s={15} $pb={5} $bold>,</Symbol></Slot>
                <VSep $ml={9} />
                <Slot $w={15} $ml={7}><DecI inc /></Slot>
                <Slot $w={15} $ml={7}><DecI /></Slot>
              </Line>
            </Stack>
          </GroupBody>
          <GroupLabel $launch>Number</GroupLabel>
          <Launcher><Launch /></Launcher>
        </Group>

        <Group $w={181}>
          <GroupBody $pl={2}>
            <Big $w={75}><BigIcon><CondI /></BigIcon><BigLine>Conditional</BigLine><BigLine>Formatting<Caret /></BigLine></Big>
            <Big $w={54}><BigIcon><TableI /></BigIcon><BigLine>Format as</BigLine><BigLine>Table<Caret /></BigLine></Big>
            <Big $w={46}><BigIcon><StylesI /></BigIcon><BigLine>Cell</BigLine><BigLine>Styles<Caret /></BigLine></Big>
          </GroupBody>
          <GroupLabel>Styles</GroupLabel>
        </Group>

        <Group $w={136}>
          <GroupBody $pl={4}>
            <Big $w={40}><BigIcon><InsertI /></BigIcon><BigLine>Insert</BigLine><CaretLine><Caret /></CaretLine></Big>
            <Big $w={46}><BigIcon><DeleteI /></BigIcon><BigLine>Delete</BigLine><CaretLine><Caret /></CaretLine></Big>
            <Big $w={38}><BigIcon><FormatI /></BigIcon><BigLine>Format</BigLine><CaretLine><Caret /></CaretLine></Big>
          </GroupBody>
          <GroupLabel>Cells</GroupLabel>
        </Group>

        <Group $w={187}>
          <GroupBody $pl={5}>
            <SmallCol $w={93}>
              <SmallRow><SmallIcon $w={21}><SumI /></SmallIcon>AutoSum<Label $ml={9}><Caret /></Label></SmallRow>
              <SmallRow><SmallIcon $w={21}><FillDownI /></SmallIcon>Fill<Label $ml={3}><Caret /></Label></SmallRow>
              <SmallRow><SmallIcon $w={21}><EraserI /></SmallIcon>Clear<Label $ml={3}><Caret /></Label></SmallRow>
            </SmallCol>
            <Big $w={38}><BigIcon><SortI /></BigIcon><BigLine>Sort &amp;</BigLine><BigLine>Filter<Caret /></BigLine></Big>
            <Big $w={46}><BigIcon><FindI /></BigIcon><BigLine>Find &amp;</BigLine><BigLine>Select<Caret /></BigLine></Big>
          </GroupBody>
          <GroupLabel>Editing</GroupLabel>
        </Group>
        <Collapse><ChevronUp /></Collapse>
      </Ribbon>

      <FormulaBar>
        <NameBox><span>A1</span><Caret $c="#777" /></NameBox>
        <Dots><VDots /></Dots>
        <FxBox><CrossI /><CheckI /><FxText>fx</FxText></FxBox>
        <FormulaInput><span>Startprotokoll Damer</span><ChevronDown /></FormulaInput>
      </FormulaBar>

      <SheetArea>
        <Sheet>
          <Corner><CornerTri /></Corner>
          {COLS.map((l, i) => <ColHead key={l} $c={i + 2} $on={i < 4}>{l}</ColHead>)}
          {ROWS.map(n => <RowHead key={n} $r={r(n)} $on={n < 3}>{n}</RowHead>)}

          <Selected>Startprotokoll Damer</Selected>

          <Cell $c={c('E')} $r={r(1)} $align="flex-end" $pr={3} $lh={18} $serif $size={13}>TÄVLING:</Cell>
          <Cell $c={c('F')} $r={r(1)} $span={5} $b $ext />
          <Cell $c={c('E')} $r={r(2)} $align="flex-end" $pr={3} $lh={18} $serif $size={13.2}>DATUM:</Cell>
          <Cell $c={c('F')} $r={r(2)} $span={5} $b $ext $size={12.5} $pl={3}>2018-05-02</Cell>
          <Cell $c={c('K')} $r={r(1)} $span={3} $align="flex-end" $pr={3} $lh={18} $serif $size={13.2}>PLATS:</Cell>
          <Cell $c={c('N')} $r={r(1)} $span={3} $b $ext />
          <Cell $c={c('K')} $r={r(2)} $span={3} $align="flex-end" $pr={3} $lh={18} $serif $size={13.2}>ORT:</Cell>
          <Cell $c={c('N')} $r={r(2)} $span={3} $b $ext />
          <Cell $c={c('K')} $r={r(3)} $span={3} $align="flex-end" $pr={3} $lh={18} $serif $size={13.2}>ARRANGÖR:</Cell>
          <Cell $c={c('N')} $r={r(3)} $span={3} $b $ext />

          <Cell $c={c('A')} $r={r(6)} $span={6} $b $rb />
          <Cell $c={c('G')} $r={r(6)} $span={4} $t $b $rb $size={12} $lh={14} $align="center">RYCK</Cell>
          <Cell $c={c('K')} $r={r(6)} $span={4} $t $b $rb $size={12} $lh={14} $align="center">STÖT</Cell>
          <Cell $c={c('O')} $r={r(6)} $rspan={2} $t $b $rb $size={12} $lh={18} $bold $align="center" $valign="flex-start">Total</Cell>
          <Cell $c={c('P')} $r={r(6)} $b />

          <HeadCell $c={c('A')} $r={r(7)} $l>Efternamn</HeadCell>
          <HeadCell $c={c('B')} $r={r(7)}>Förnamn</HeadCell>
          <HeadCell $c={c('C')} $r={r(7)}>Klass</HeadCell>
          <HeadCell $c={c('D')} $r={r(7)}>K.V.</HeadCell>
          <HeadCell $c={c('E')} $r={r(7)}>Klubb</HeadCell>
          <HeadCell $c={c('F')} $r={r(7)}>Född</HeadCell>
          <HeadCell $c={c('G')} $r={r(7)}>Ingång</HeadCell>
          <HeadCell $c={c('H')} $r={r(7)}>1</HeadCell>
          <HeadCell $c={c('I')} $r={r(7)}>2</HeadCell>
          <HeadCell $c={c('J')} $r={r(7)}>3</HeadCell>
          <HeadCell $c={c('K')} $r={r(7)}>Ingång</HeadCell>
          <HeadCell $c={c('L')} $r={r(7)}>1</HeadCell>
          <HeadCell $c={c('M')} $r={r(7)}>2</HeadCell>
          <HeadCell $c={c('N')} $r={r(7)}>3</HeadCell>
          <HeadCell $c={c('P')} $r={r(7)}>Koeff</HeadCell>

          {groups.map(g => (
            <React.Fragment key={g.title}>
              <Cell $c={c('A')} $r={r(g.start - 1)} $span={16} $b $pl={4} $pb={1}>{g.title}</Cell>
              {g.people.map((p, i) => <PersonRow key={p[0]} row={g.start + i} p={p} />)}
            </React.Fragment>
          ))}
        </Sheet>
        <VScroll>
          <ScrollBtn><Tri $d="u" /></ScrollBtn>
          <VThumb />
          <VTrack />
          <ScrollBtn><Tri $d="d" /></ScrollBtn>
        </VScroll>
      </SheetArea>

      <TabsBar>
        <TabNav><Tri $d="l" $c="#bbb" /><Tri $d="r" $c="#bbb" /></TabNav>
        <SheetTab $w={99} $on>Damer Start</SheetTab>
        <SheetTab $w={96}>Herrar Start</SheetTab>
        <SheetTab $w={118}>Damer Resultat</SheetTab>
        <SheetTab $w={117}>Herrar Resultat</SheetTab>
        <AddTab><PlusI /></AddTab>
        <HDots><VDots /></HDots>
        <HScroll>
          <ScrollBtn $w={14} $h={14}><Tri $d="l" /></ScrollBtn>
          <HThumb />
          <HGap />
          <ScrollBtn $w={14} $h={14}><Tri $d="r" /></ScrollBtn>
        </HScroll>
      </TabsBar>

      <Status>
        <span>Ready</span>
        <MacroIcon><MacroI /></MacroIcon>
        <ViewBtn $w={38} $ml={1005} $on><NormalI /></ViewBtn>
        <ViewBtn $w={38}><LayoutI /></ViewBtn>
        <ViewBtn $w={38}><BreakI /></ViewBtn>
        <Zoom>
          <Symbol $s={14}>-</Symbol>
          <Slider><Knob /><Tick /></Slider>
          <Symbol $s={14}>+</Symbol>
          <ZoomText>90 %</ZoomText>
        </Zoom>
      </Status>

      <Taskbar>
        <TaskBtn $w={48}><WinI /></TaskBtn>
        <TaskBtn $w={50}><SearchI /></TaskBtn>
        <TaskBtn $w={50} $run><ChromeI /></TaskBtn>
        <TaskBtn $w={49} $run><FolderI /></TaskBtn>
        <TaskBtn $w={49}><SpotifyI /></TaskBtn>
        <TaskBtn $w={49}><TreeI /></TaskBtn>
        <TaskBtn $w={49}><SublimeI /></TaskBtn>
        <TaskBtn $w={49}><LambdaBox>λ</LambdaBox></TaskBtn>
        <TaskBtn $w={49}><VsI /></TaskBtn>
        <TaskBtn $w={49} $run><OfficeI c="#2b5797" letter="W" lines="M14 6h8M14 9h8M14 12h8M14 15h8M14 18h8" /></TaskBtn>
        <TaskBtn $w={49} $run $on><OfficeI c="#217346" letter="X" lines="M14 6h8M14 10h8M14 14h8M14 18h8M18 4v16" /></TaskBtn>
        <TaskBtn $w={49}><OfficeI c="#d24726" letter="P" lines="M14 15h8M14 18h8" /></TaskBtn>
        <TaskBtn $w={49}><AppBox $bd="#5d9bd5" $bg="#0a1a3a" $fg="#6fb4f0">Ps</AppBox></TaskBtn>
        <TaskBtn $w={49}><AppBox $bd="#f29a1e" $bg="#2a1500" $fg="#f29a1e">Ai</AppBox></TaskBtn>
        <TaskBtn $w={49}><AppBox $bd="#b64fd8" $bg="#24082e" $fg="#cf6cf0">Pr</AppBox></TaskBtn>
        <TaskBtn $w={49} $run><JavaBox><JavaI /></JavaBox></TaskBtn>
        <TaskBtn $w={49} $run><PaletteI /></TaskBtn>
        <Tray>
          <TraySlot $w={22}><WifiI /></TraySlot>
          <TraySlot $w={23}><PowerI /></TraySlot>
          <TraySlot $w={26}><VolI /></TraySlot>
          <TraySlot $w={29} $pl={3}>SWE</TraySlot>
          <Clock>11:10<br />2018-05-01</Clock>
          <TraySlot $w={32}><NotifI /></TraySlot>
          <TraySlot $w={17} />
        </Tray>
      </Taskbar>
    </Window>
  );
}
